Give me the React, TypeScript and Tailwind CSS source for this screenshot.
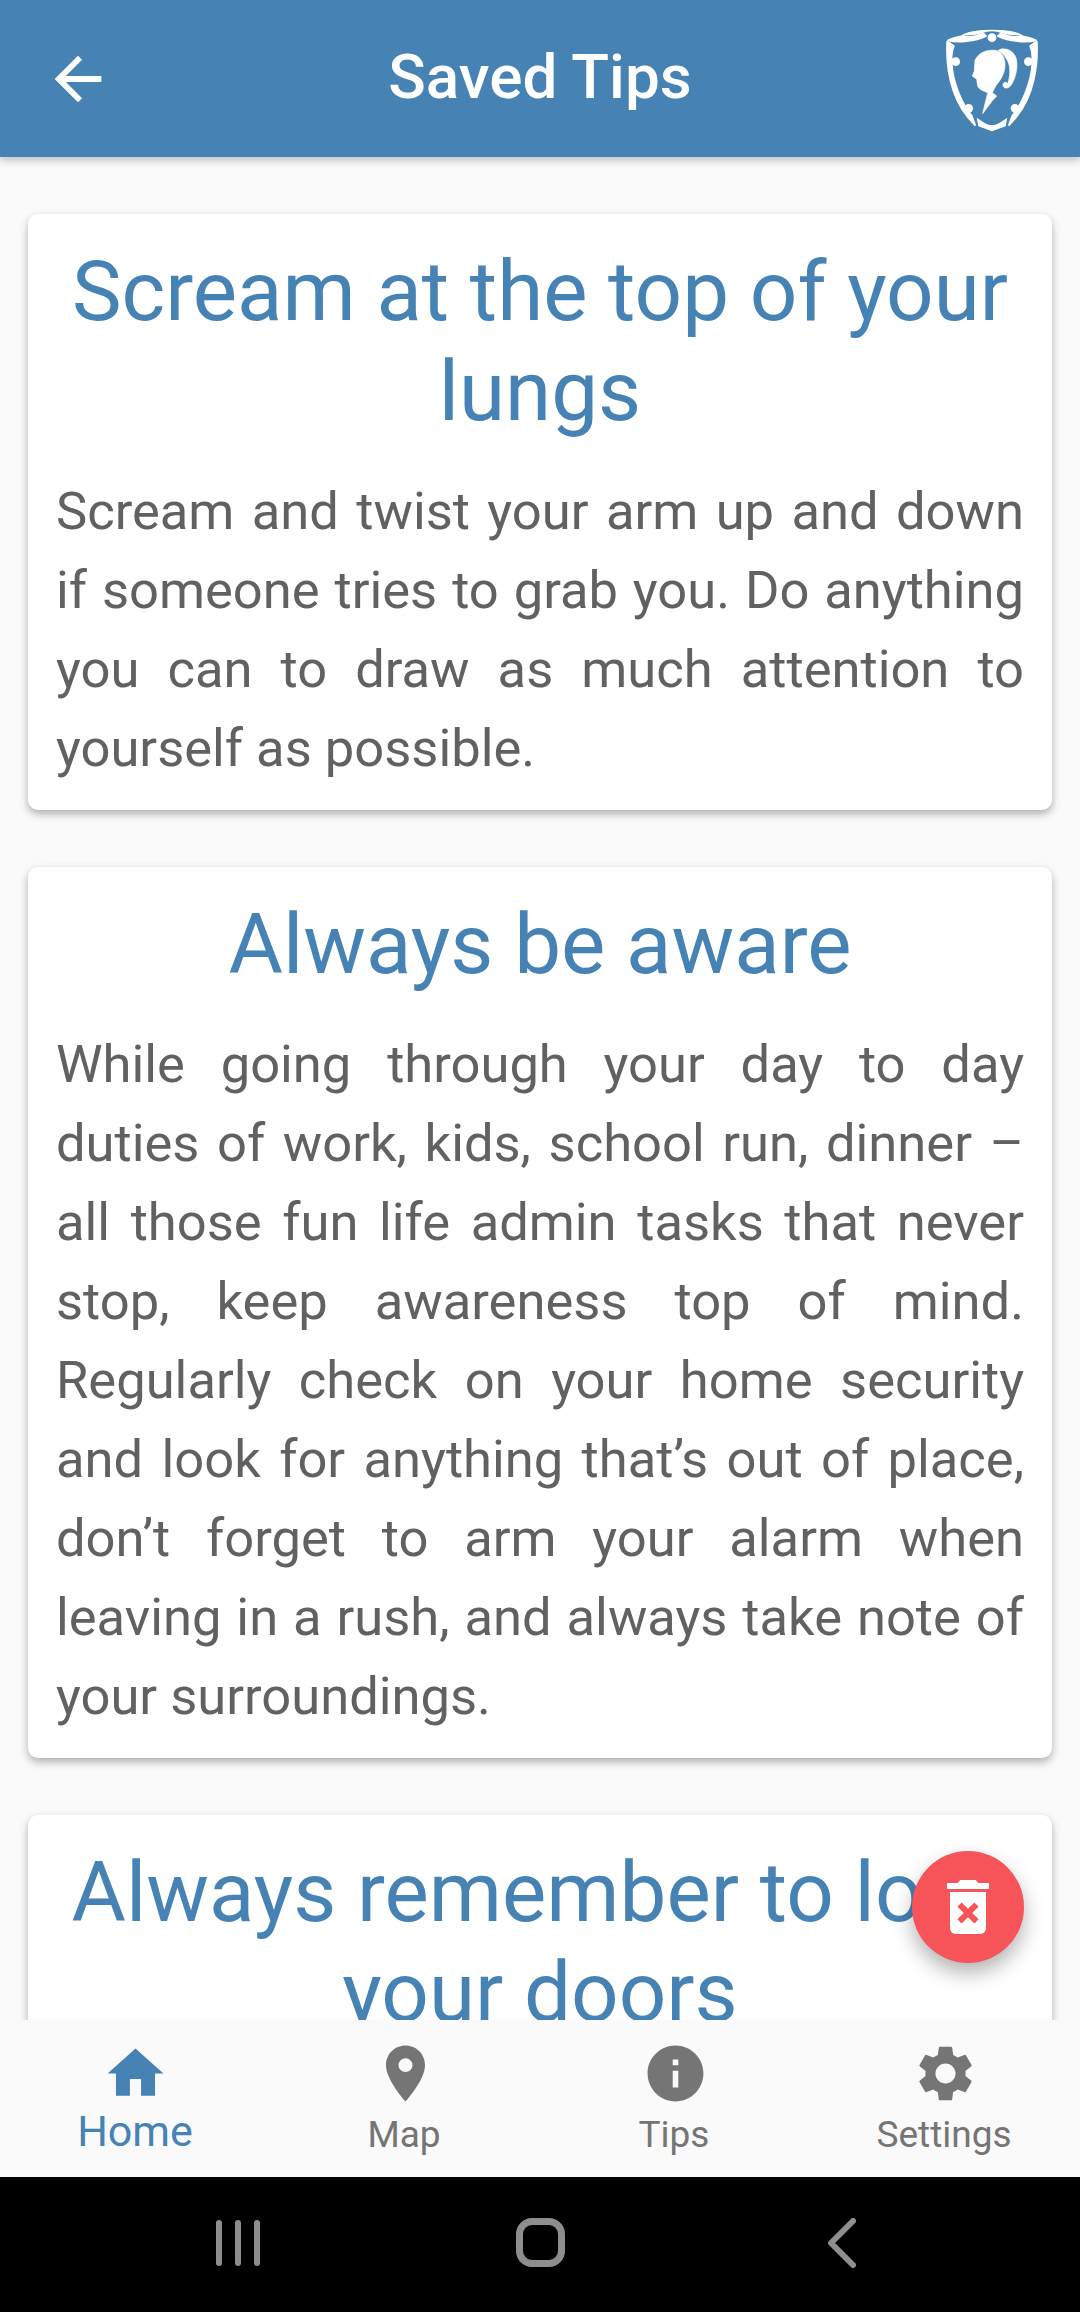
import { MdArrowBack, MdDeleteForever, MdHome, MdInfo, MdPlace, MdSettings } from 'react-icons/md';

const tips = [
  {
    title: 'Scream at the top of your lungs',
    body: 'Scream and twist your arm up and down if someone tries to grab you. Do anything you can to draw as much attention to yourself as possible.',
  },
  {
    title: 'Always be aware',
    body: 'While going through your day to day duties of work, kids, school run, dinner – all those fun life admin tasks that never stop, keep awareness top of mind. Regularly check on your home security and look for anything that’s out of place, don’t forget to arm your alarm when leaving in a rush, and always take note of your surroundings.',
  },
  {
    title: 'Always remember to lock your doors',
    body: 'Make sure every door is locked before you leave the house and when you go to bed at night.',
  },
];

const navItems = [
  { label: 'Map', icon: MdPlace },
  { label: 'Tips', icon: MdInfo },
  { label: 'Settings', icon: MdSettings },
];

function ShieldSide() {
  return (
    <g stroke="#fff" strokeWidth="6" strokeLinejoin="round">
      <path d="M37 62 C33 130 45 225 100 290 L120 312 L110 285 C80 250 58 190 52 150 C48 125 48 95 56 75 Z" />
      <path d="M40 58 C70 66 120 60 153 45 L143 37 C125 46 105 52 85 45 C68 48 52 52 40 58 Z" />
    </g>
  );
}

function ShieldLogo() {
  return (
    <svg viewBox="0 0 330 345" className="w-[110px] h-[115px]" fill="#fff">
      <ShieldSide />
      <g transform="translate(342 0) scale(-1 1)">
        <ShieldSide />
      </g>
      <path d="M88 40 C125 24 217 24 254 40 C235 42 218 40 200 34 C180 27 162 27 142 34 C125 40 105 42 88 40 Z" stroke="#fff" strokeWidth="4" />
      <path d="M125 290 C140 300 155 312 171 312 C187 312 202 300 217 290 L212 316 L171 331 L130 316 Z" />
      <circle cx="171" cy="50" r="13" />
      <circle cx="62" cy="122" r="13" />
      <circle cx="280" cy="122" r="13" />
      <circle cx="101" cy="262" r="13" />
      <circle cx="240" cy="262" r="13" />
      <path d="M120 118 C130 95 155 85 180 88 C198 90 212 110 210 135 C208 160 198 175 182 195 L172 215 L185 225 C170 240 155 262 143 278 C148 255 155 230 158 215 C145 210 132 205 128 195 L125 175 L112 165 L118 150 Z" stroke="#fff" strokeWidth="2" />
      <path d="M190 88 C205 78 232 85 242 108 C250 130 245 165 230 190 C222 205 203 205 204 190 C206 182 214 182 218 188 C225 170 228 140 218 120 C212 108 205 100 190 88 Z" stroke="#fff" strokeWidth="2" />
    </svg>
  );
}

export default function App() {
  return (
    <div className="w-[1080px] h-[2312px] flex flex-col overflow-hidden relative bg-[#fafafa] font-['Roboto',sans-serif]">
      <header className="h-[157px] shrink-0 relative z-10 bg-[#4682b4] shadow-[0_3px_8px_rgba(0,0,0,0.25)] flex items-center justify-between px-[35px]">
        <div className="w-[110px] pl-[8px]">
          <MdArrowBack className="text-white w-[70px] h-[70px]" />
        </div>
        <h1 className="text-white text-[62px] leading-none font-medium pb-[4px]">Saved Tips</h1>
        <ShieldLogo />
      </header>

      <main className="flex-1 min-h-0 overflow-hidden px-[28px] pt-[57px] flex flex-col gap-[57px]">
        {tips.map((tip) => (
          <article key={tip.title} className="shrink-0 bg-white rounded-[10px] shadow-[0_4px_8px_rgba(0,0,0,0.3)] pt-[28px] pb-[22px] px-[28px]">
            <h2 className="text-[#4682b4] text-[83.5px] leading-[100px] text-center">{tip.title}</h2>
            <p className="mt-[30px] text-[#616161] text-[52.5px] leading-[79px] text-justify">{tip.body}</p>
          </article>
        ))}
      </main>

      <button className="absolute z-20 left-[912px] top-[1851px] w-[112px] h-[112px] rounded-full bg-[#f75459] shadow-[0_10px_20px_rgba(0,0,0,0.3)] flex items-center justify-center">
        <MdDeleteForever className="text-white w-[72px] h-[72px]" />
      </button>

      <nav className="h-[157px] shrink-0 relative z-10 bg-[#fafafa] grid grid-cols-4">
        <div className="flex flex-col items-center pt-[20px] text-[#4682b4]">
          <MdHome className="w-[67px] h-[67px]" />
          <span className="text-[43px] leading-[50px] -mt-[1px]">Home</span>
        </div>
        {navItems.map(({ label, icon: Icon }) => (
          <div key={label} className="flex flex-col items-center pt-[20px] text-[#757575]">
            <Icon className="w-[67px] h-[67px]" />
            <span className="text-[37px] leading-[42px] mt-[7px] pr-[2px]">{label}</span>
          </div>
        ))}
      </nav>

      <div className="h-[135px] shrink-0 bg-black flex items-center justify-center pb-[4px] pr-[8px]">
        <div className="flex gap-[13px]">
          <div className="w-[6px] h-[46px] rounded-full bg-[#8e8e8e]" />
          <div className="w-[6px] h-[46px] rounded-full bg-[#8e8e8e]" />
          <div className="w-[6px] h-[46px] rounded-full bg-[#8e8e8e]" />
        </div>
        <div className="ml-[256px] w-[49px] h-[49px] rounded-[16px] border-[7px] border-[#8e8e8e]" />
        <svg viewBox="0 0 30 50" className="ml-[261px] w-[30px] h-[50px]" fill="none" stroke="#8e8e8e" strokeWidth="6" strokeLinecap="round" strokeLinejoin="round">
          <path d="M27 3 L5 25 L27 47" />
        </svg>
      </div>
    </div>
  );
}
